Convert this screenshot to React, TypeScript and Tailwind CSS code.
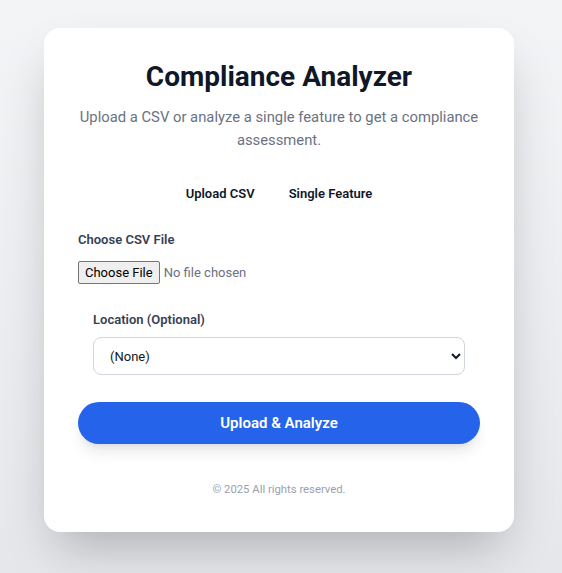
import { useState } from "react";

const App = () => {
  const [tab, setTab] = useState<"csv" | "single">("csv");

  return (
    <div
      className="min-h-screen bg-gradient-to-b from-[#f3f4f6] to-[#e5e7eb] pt-[28px] pb-10"
      style={{ fontFamily: "Roboto, 'Noto Sans', sans-serif" }}
    >
      <div className="ml-[44px] w-[470px] rounded-2xl bg-white px-[34px] pt-8 pb-[34px] shadow-2xl">
        <h1 className="text-center text-[28px] leading-[34px] font-bold text-gray-900">
          Compliance Analyzer
        </h1>
        <p className="-mx-2 mt-[12px] text-center text-[14.8px] leading-[23px] text-gray-500">
          Upload a CSV or analyze a single feature to get a compliance
          assessment.
        </p>

        <div className="mt-[25px] flex justify-center gap-1">
          <button
            onClick={() => setTab("csv")}
            className="px-[15px] py-2 text-[13px] leading-[18px] font-semibold text-gray-900"
          >
            Upload CSV
          </button>
          <button
            onClick={() => setTab("single")}
            className="px-[15px] py-2 text-[13px] leading-[18px] font-semibold text-gray-900"
          >
            Single Feature
          </button>
        </div>

        {tab === "csv" && (
          <form className="mt-[20px]" onSubmit={(e) => e.preventDefault()}>
            <label className="block text-[13px] leading-[18px] font-semibold text-gray-700">
              Choose CSV File
            </label>
            <input
              type="file"
              accept=".csv"
              className="mt-[12px] block text-[13px] leading-[17px] text-gray-500 file:mr-1 file:rounded-[2px] file:border file:border-[#767676] file:bg-[#efefef] file:px-1.5 file:py-[2px] file:text-black"
            />

            <div className="mt-[27px] px-[15px]">
              <label className="block text-[13px] leading-[18px] font-semibold text-gray-700">
                Location (Optional)
              </label>
              <select className="mt-2 block h-[38px] w-full rounded-lg border border-gray-300 px-3 text-[13px] text-gray-900">
                <option>(None)</option>
                <option>California</option>
                <option>European Union</option>
              </select>
            </div>

            <button
              type="submit"
              className="mt-[27px] block h-[42px] w-full rounded-full bg-[#2563eb] text-[15px] font-semibold text-white shadow-lg"
            >
              Upload &amp; Analyze
            </button>
          </form>
        )}

        <p className="mt-[38px] text-center text-[11.3px] leading-4 text-gray-400">
          © 2025 All rights reserved.
        </p>
      </div>
    </div>
  );
};

export default App;
